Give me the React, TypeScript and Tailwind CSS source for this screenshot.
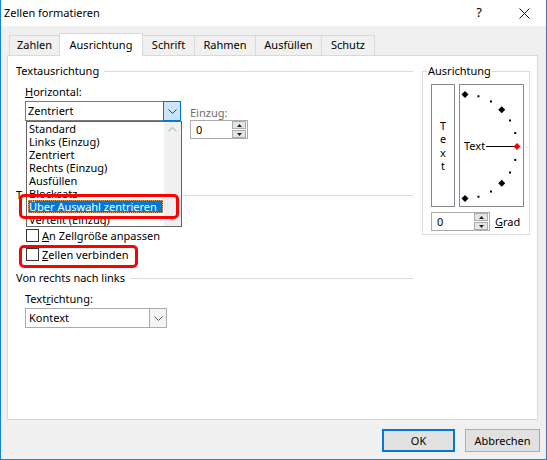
import React from 'react'

const font = "font-['Noto_Sans',sans-serif]"

const Chevron = ({ color = '#404040' }: { color?: string }) => (
  <svg width="9" height="5" viewBox="0 0 9 5">
    <path d="M0.5 0.5 L4.5 4.5 L8.5 0.5" fill="none" stroke={color} strokeWidth="1" />
  </svg>
)

const Section = ({ title }: { title: React.ReactNode }) => (
  <div className="flex items-center h-[14px] leading-[14px]">
    <span>{title}</span>
    <div className="flex-1 h-px bg-[#dcdcdc] ml-[5px]" />
  </div>
)

const Spin = ({ w }: { w: string }) => (
  <div className={`flex items-center h-[19px] border border-[#acacac] bg-white ${w}`}>
    <span className="flex-1 pl-[5px] leading-[14px]">0</span>
    <div className="flex flex-col gap-px w-[14px] mr-px">
      <div className="h-[8px] border border-[#acacac] bg-[#e5e5e5] flex items-center justify-center">
        <svg width="5" height="3" viewBox="0 0 5 3">
          <path d="M0 3 L2.5 0 L5 3 Z" fill="#202020" />
        </svg>
      </div>
      <div className="h-[8px] border border-[#acacac] bg-[#e5e5e5] flex items-center justify-center">
        <svg width="5" height="3" viewBox="0 0 5 3">
          <path d="M0 0 L2.5 3 L5 0 Z" fill="#202020" />
        </svg>
      </div>
    </div>
  </div>
)

const Check = ({ children, hidden = false }: { children?: React.ReactNode; hidden?: boolean }) => (
  <div className={`flex items-center h-[13px] pl-[10px] gap-[3px] ${hidden ? 'invisible' : ''}`}>
    <div className="w-[13px] h-[13px] border border-[#333333] bg-white" />
    <span className="leading-[14px]">{children}</span>
  </div>
)

// dial points, every 15 degrees from -90 to 90
const dial = (() => {
  const cx = 5
  const cy = 61.5
  const r = 52
  const pts: { x: number; y: number; big: boolean; red: boolean }[] = []
  for (let a = -90; a <= 90; a += 15) {
    const rad = (a * Math.PI) / 180
    pts.push({ x: cx + r * Math.cos(rad), y: cy - r * Math.sin(rad), big: a % 45 === 0, red: a === 0 })
  }
  return pts
})()

const options = [
  'Standard',
  'Links (Einzug)',
  'Zentriert',
  'Rechts (Einzug)',
  'Ausfüllen',
  'Blocksatz',
  'Über Auswahl zentrieren',
  'Verteilt (Einzug)'
]

const tabs = [
  { id: 'Zahlen', w: 'w-[50px] border-l' },
  { id: 'Ausrichtung', w: 'w-[84px]' },
  { id: 'Schrift', w: 'w-[52px] border-r' },
  { id: 'Rahmen', w: 'w-[61px] border-r' },
  { id: 'Ausfüllen', w: 'w-[66px] border-r' },
  { id: 'Schutz', w: 'w-[53px] border-r' }
]

export default function App() {
  return (
    <div className={`relative w-[547px] h-[460px] overflow-hidden bg-[#f0f0f0] border-x border-b border-[#1883d7] text-[11px] text-black ${font}`}>
      {/* title bar */}
      <div className="h-[26px] bg-white flex items-center pl-[3px]">
        <span className="flex-1 leading-[14px]">Zellen formatieren</span>
        <div className="w-[46px] flex justify-center text-[13px]">?</div>
        <div className="w-[44px] flex justify-center">
          <svg width="11" height="11" viewBox="0 0 11 11">
            <path d="M0.5 0.5 L10.5 10.5 M10.5 0.5 L0.5 10.5" stroke="#111" strokeWidth="1" />
          </svg>
        </div>
      </div>

      {/* tabs */}
      <div className="relative z-10 flex items-end pl-[8px] pt-[7px] -mb-px">
        {tabs.map((t) =>
          t.id === 'Ausrichtung' ? (
            <div
              key={t.id}
              className={`${t.w} h-[23px] bg-white border-x border-t border-[#d9d9d9] flex items-center justify-center`}
            >
              {t.id}
            </div>
          ) : (
            <div
              key={t.id}
              className={`${t.w} h-[20px] mb-px border-t border-[#d9d9d9] flex items-center justify-center`}
            >
              {t.id}
            </div>
          )
        )}
      </div>

      {/* panel */}
      <div className="ml-[6px] w-[531px] h-[365px] bg-white border border-[#d9d9d9] flex pl-[8px]">
        <div className="w-[397px] flex flex-col pt-[8px]">
          <Section title="Textausrichtung" />
          <div className="mt-[7px] pl-[9px] h-[14px] leading-[14px]">
            <span className="underline">H</span>orizontal:
          </div>
          <div className="mt-[2px] pl-[9px] flex">
            <div className="w-[156px] h-[20px] border border-[#7a7a7a] flex items-center">
              <span className="flex-1 pl-[2px] leading-[14px]">Zentriert</span>
              <div className="w-[18px] h-[20px] -mr-px bg-[#cce4f7] border border-[#0078d7] flex items-center justify-center">
                <Chevron />
              </div>
            </div>
            <div className="ml-[9px] flex flex-col">
              <div className="mt-[5px] h-[14px] leading-[14px] text-[#6d6d6d]">Einzug:</div>
              <Spin w="w-[58px]" />
            </div>
          </div>

          <div className="mt-[49px]">
            {/* only the first letter shows beside the open list */}
            <Section title={<span className="inline-block w-[9px] overflow-hidden align-top">T</span>} />
          </div>
          <div className="mt-[8px] flex flex-col gap-[6px]">
            <Check hidden />
            <Check>
              <span className="underline">A</span>n Zellgröße anpassen
            </Check>
            <Check>
              <span className="underline">Z</span>ellen verbinden
            </Check>
          </div>

          <div className="mt-[10px]">
            <Section title="Von rechts nach links" />
          </div>
          <div className="mt-[7px] pl-[9px] h-[14px] leading-[14px]">
            Text<span className="underline">r</span>ichtung:
          </div>
          <div className="mt-[2px] pl-[9px]">
            <div className="w-[142px] h-[20px] border border-[#acacac] flex items-center">
              <span className="flex-1 pl-[3px] leading-[14px]">Kontext</span>
              <div className="w-[17px] h-full border-l border-[#acacac] bg-[#f4f4f4] flex items-center justify-center">
                <Chevron color="#606060" />
              </div>
            </div>
          </div>
        </div>

        {/* Ausrichtung group */}
        <fieldset className="mt-[8px] ml-[9px] w-[108px] h-[171px] border border-[#dcdcdc]">
          <legend className="ml-[4px] px-[1px] leading-[14px]">Ausrichtung</legend>
          <div className="pl-[8px] pt-[6px] flex flex-col">
            <div className="flex gap-[4px]">
              <div className="w-[24px] h-[123px] border border-[#828790] flex flex-col items-center justify-center leading-[13.5px]">
                <span>T</span>
                <span>e</span>
                <span>x</span>
                <span>t</span>
              </div>
              <div className="relative w-[65px] h-[123px] border border-[#828790]">
                <svg width="63" height="121" viewBox="0 0 63 121" className="absolute left-0 top-0">
                  <line x1="26" y1="61.5" x2="54" y2="61.5" stroke="#000" strokeWidth="1" />
                  {dial.map((p, i) =>
                    p.big ? (
                      <polygon
                        key={i}
                        points={`${p.x},${p.y - 3.5} ${p.x + 3.5},${p.y} ${p.x},${p.y + 3.5} ${p.x - 3.5},${p.y}`}
                        fill={p.red ? '#ff0000' : '#000'}
                      />
                    ) : (
                      <rect key={i} x={p.x - 1} y={p.y - 1} width="2" height="2" fill="#000" />
                    )
                  )}
                </svg>
                <span className="absolute left-[4px] top-[54px] leading-[14px]">Text</span>
              </div>
            </div>
            <div className="mt-[5px] flex items-center">
              <Spin w="w-[59px]" />
              <span className="ml-[5px] leading-[14px]">
                <span className="underline">G</span>rad
              </span>
            </div>
          </div>
        </fieldset>
      </div>

      {/* buttons */}
      <div className="flex justify-end gap-[10px] pt-[9px] pr-[6px]">
        <button className="w-[73px] h-[23px] border-2 border-[#0078d7] bg-[#e1e1e1] leading-[14px]">OK</button>
        <button className="w-[75px] h-[23px] border border-[#adadad] bg-[#e1e1e1] leading-[14px]">Abbrechen</button>
      </div>

      {/* open dropdown list */}
      <div className="absolute left-[25px] top-[121px] w-[156px] h-[106px] border border-[#646464] bg-white flex overflow-hidden z-20">
        <div className="flex-1 flex flex-col">
          {options.map((o) =>
            o.startsWith('Über') ? (
              <div
                key={o}
                className="mx-px h-[13px] leading-[13px] pl-[1px] bg-[#0078d7] text-white outline-1 outline-dotted outline-[#e0a060] -outline-offset-1 shrink-0"
              >
                {o}
              </div>
            ) : (
              <div key={o} className="mx-px h-[13px] leading-[13px] pl-[1px] shrink-0">
                {o}
              </div>
            )
          )}
        </div>
        <div className="w-[17px] bg-[#f0f0f0] flex flex-col justify-between items-center py-[5px]">
          <svg width="9" height="5" viewBox="0 0 9 5">
            <path d="M0.5 4.5 L4.5 0.5 L8.5 4.5" fill="none" stroke="#c0c0c0" strokeWidth="1.2" />
          </svg>
          <svg width="9" height="5" viewBox="0 0 9 5">
            <path d="M0.5 0.5 L4.5 4.5 L8.5 0.5" fill="none" stroke="#c0c0c0" strokeWidth="1.2" />
          </svg>
        </div>
      </div>

      {/* red highlight marks */}
      <div className="absolute left-[18px] top-[194px] w-[160px] h-[25px] border-[3px] border-[#ff0000] rounded-[5px] z-30" />
      <div className="absolute left-[18px] top-[245px] w-[119px] h-[23px] border-[3px] border-[#ff0000] rounded-[5px] z-30" />
    </div>
  )
}
